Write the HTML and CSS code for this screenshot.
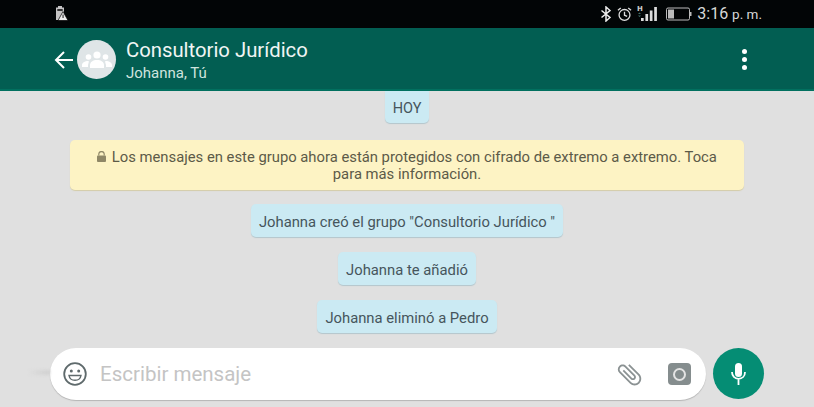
FILE: index.html
```html
<!DOCTYPE html>
<html lang="es">
<head>
<meta charset="UTF-8" />
<meta name="viewport" content="width=device-width, initial-scale=1" />
<title>Consultorio Jurídico</title>
<link rel="stylesheet" href="styles.css">
</head>
<body>

<div class="statusbar">
  <svg width="13" height="15" viewBox="0 0 13 15">
    <path d="M3 0h4v1.500h2V7L5 14H1V1.500h2z" fill="#c4c4c4"/>
    <path d="M2.300 3h5.400v2H2.300z" fill="#333"/>
    <path d="M8 5.500L13 14.500H3z" fill="#eee" stroke="#000" stroke-width=".7"/>
    <path d="M7.600 8.500h.9v3.500h-.9z" fill="#000"/>
  </svg>
  <div class="status-right">
    <svg width="10" height="16" viewBox="0 0 10 16" fill="none" stroke="#eee" stroke-width="1.500">
      <path d="M.5 4.500l8.500 7L5 15V1L9 4.500l-8.500 7"/>
    </svg>
    <svg width="15" height="16" viewBox="0 0 16 16" fill="none" stroke="#ddd" stroke-width="1.400">
      <circle cx="8" cy="9" r="5.800"/>
      <path d="M8 5.500v3.800l2.800 1.200M1 4l3-2.500M15 4l-3-2.500"/>
    </svg>
    <svg class="signal" width="21" height="18" viewBox="0 0 21 18">
      <text x="0" y="6" class="net-type">H</text>
      <path d="M1 9l1.500-1.500L4 9zM1 10.500h3L2.500 12z" fill="#3d6f6a"/>
      <path d="M4 13h2.700v3H4zM8.400 9h2.700v7H8.400zM12.800 5.500h2.700V16h-2.700zM17.200 2h2.700v14h-2.700z" fill="#ddd"/>
    </svg>
    <svg class="battery" width="26" height="14" viewBox="0 0 26 14">
      <rect x=".5" y="1" width="23" height="12" rx="1.500" fill="none" stroke="#bbb"/>
      <rect x="2" y="2.500" width="6" height="9" fill="#bbb"/>
      <rect x="24" y="5" width="1.500" height="4" fill="#bbb"/>
    </svg>
    <span class="clock">3:16 <small>p. m.</small></span>
  </div>
</div>

<header class="appbar">
  <svg class="back" width="20" height="20" viewBox="0 0 20 20" fill="none" stroke="#fff" stroke-width="2">
    <path d="M19 10H2M10 2l-8 8 8 8"/>
  </svg>
  <div class="avatar">
    <svg width="30" height="18" viewBox="0 0 30 18" fill="#fff">
      <circle cx="15" cy="4" r="3.600"/>
      <circle cx="6.500" cy="6" r="2.800"/>
      <circle cx="23.500" cy="6" r="2.800"/>
      <path d="M8 17v-3c0-3 3-5 7-5s7 2 7 5v3z"/>
      <path d="M0 16v-2c0-2 2.500-4 6.500-4 .5 0 .5 1-.5 4v2zM30 16v-2c0-2-2.500-4-6.500-4-.5 0-.5 1 .5 4v2z"/>
    </svg>
  </div>
  <div class="chat-info">
    <div class="chat-title">Consultorio Jurídico</div>
    <div class="chat-sub">Johanna, Tú</div>
  </div>
  <div class="menu-dots"><i></i><i></i><i></i></div>
</header>

<main class="messages">
  <div class="bubble day">HOY</div>
  <div class="bubble notice">
    <svg class="lock" width="9" height="11" viewBox="0 0 10 12">
      <path d="M2 5V3.500a3 3 0 0 1 6 0V5" fill="none" stroke="#8f8766" stroke-width="1.300"/>
      <rect y="5" width="10" height="7" rx="1" fill="#8f8766"/>
    </svg>
    Los mensajes en este grupo ahora están protegidos con cifrado de extremo a extremo. Toca para más información.
  </div>
  <div class="bubble">Johanna creó el grupo "Consultorio Jurídico "</div>
  <div class="bubble">Johanna te añadió</div>
  <div class="bubble">Johanna eliminó a Pedro</div>
</main>

<footer class="composer">
  <div class="input-box">
    <svg width="24" height="24" viewBox="0 0 24 24" fill="none" stroke="#5f6a6c" stroke-width="1.800">
      <circle cx="12" cy="12" r="10.800"/>
      <circle cx="8.300" cy="9" r="1.500" fill="#5f6a6c" stroke="none"/>
      <circle cx="15.700" cy="9" r="1.500" fill="#5f6a6c" stroke="none"/>
      <path d="M6 13.500h12c-.5 3-2.800 4.800-6 4.800s-5.500-1.800-6-4.800z" stroke-width="1.400"/>
    </svg>
    <span class="placeholder">Escribir mensaje</span>
    <svg class="clip" width="29" height="29" viewBox="0 0 24 24" fill="#8b9293">
      <path transform="rotate(-45 12 12)" d="M16.500 6v11.500c0 2.210-1.790 4-4 4s-4-1.790-4-4V5c0-1.380 1.120-2.500 2.500-2.500s2.500 1.120 2.500 2.500v10.500c0 .55-.45 1-1 1s-1-.45-1-1V6H10v9.500c0 1.380 1.120 2.500 2.500 2.500s2.500-1.120 2.500-2.500V5c0-2.210-1.790-4-4-4S7 2.790 7 5v12.500c0 3.040 2.460 5.500 5.500 5.500s5.500-2.460 5.500-5.500V6h-1.500z"/>
    </svg>
    <div class="camera"><i></i></div>
  </div>
  <button class="mic">
    <svg width="15" height="22" viewBox="0 0 15 22" fill="none" stroke="#fff" stroke-width="1.800">
      <rect x="4" y="0" width="7" height="14" rx="3.500" fill="#fff" stroke="none"/>
      <path d="M1 9c0 4.200 2.800 6.800 6.500 6.800S14 13.200 14 9M7.500 15.800V22"/>
    </svg>
  </button>
</footer>

</body>
</html>
```

FILE: styles.css
```css
* {
  box-sizing: border-box;
}
html, body {
  height: 100%;
}
body {
  margin: 0;
  background: #e0e0e0;
  font-family: Roboto, "Liberation Sans", sans-serif;
  overflow: hidden;
  display: flex;
  flex-direction: column;
}

.statusbar {
  height: 28px;
  background: #020506;
  display: flex;
  align-items: center;
  justify-content: space-between;
  padding: 0 52px 0 55px;
}
.status-right {
  display: flex;
  align-items: center;
  gap: 6px;
}
.signal {
  margin-left: -1px;
}
.net-type {
  font-size: 7px;
  font-weight: bold;
  fill: #ccc;
  font-family: "DejaVu Sans", sans-serif;
}
.battery {
  margin-left: 2px;
}
.clock {
  color: #d8d8d8;
  font-size: 16px;
  margin-left: -1px;
}
.clock small {
  font-size: 13.5px;
}

.appbar {
  height: 64px;
  background: #025e52;
  border-bottom: 2px solid #01705f;
  display: flex;
  align-items: center;
  padding: 2px 0 0 54px;
}
.avatar {
  width: 39px;
  height: 39px;
  border-radius: 50%;
  background: #dfe5e7;
  margin-left: 3px;
  display: flex;
  align-items: center;
  justify-content: center;
}
.chat-info {
  margin-left: 10px;
  flex: 1;
}
.chat-title {
  color: #f0f5f4;
  font-size: 20.3px;
  line-height: 26px;
}
.chat-sub {
  color: #cfe4df;
  font-size: 15px;
  line-height: 20px;
}
.menu-dots {
  display: flex;
  flex-direction: column;
  gap: 3px;
  margin-right: 67px;
}
.menu-dots i {
  width: 5px;
  height: 5px;
  border-radius: 50%;
  background: #fff;
}

.messages {
  flex: 1;
  display: flex;
  flex-direction: column;
  align-items: center;
}
.bubble {
  height: 33px;
  background: #cbeaf3;
  color: #46555c;
  font-size: 14.8px;
  line-height: 21px;
  padding: 8px 8px 4px;
  border-radius: 5px;
  box-shadow: 0 1px 1px #b3c6cc;
  margin-bottom: 15px;
  text-align: center;
}
.day {
  height: 32px;
  font-size: 14.5px;
  padding: 7px 8px 4px;
  margin-bottom: 17px;
  border-radius: 0 0 5px 5px;
}
.notice {
  width: 674px;
  height: 50px;
  background: #fdf3c4;
  color: #5c5a48;
  box-shadow: 0 1px 1px #d4cda8;
  padding: 9px 20px 0;
  line-height: 17px;
  margin-bottom: 14px;
}
.lock {
  margin-right: 2px;
}

.composer {
  height: 59px;
  display: flex;
  align-items: flex-start;
  padding: 0 50px 0 28px;
}
.composer::before {
  content: "";
  width: 22px;
  height: 5px;
  margin-top: 22px;
  background: linear-gradient(to right, transparent, #cfcfcf);
  filter: blur(1.5px);
}
.input-box {
  flex: 1;
  height: 52px;
  background: #fff;
  border-radius: 26px;
  box-shadow: 0 1px 1px #b5b5b5;
  display: flex;
  align-items: center;
  padding: 0 15px 0 13px;
}
.placeholder {
  flex: 1;
  color: #c4c4c4;
  font-size: 20.5px;
  margin-left: 13px;
}
.clip {
  margin-right: 24px;
}
.camera {
  width: 23px;
  height: 22px;
  border-radius: 4px;
  background: #858d8e;
  display: flex;
  align-items: center;
  justify-content: center;
}
.camera i {
  width: 13px;
  height: 13px;
  border-radius: 50%;
  border: 2.5px solid #e4e4e4;
}
.mic {
  width: 51px;
  height: 51px;
  margin-left: 7px;
  border: none;
  padding: 0;
  border-radius: 50%;
  background: #058d74;
  display: flex;
  align-items: center;
  justify-content: center;
}
```
